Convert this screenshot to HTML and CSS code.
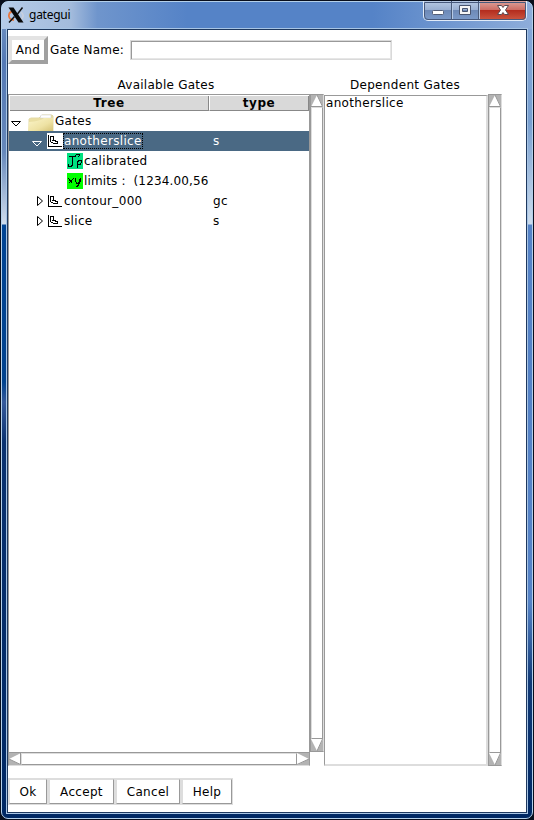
FILE: index.html
```html
<!DOCTYPE html>
<html lang="en">
<head>
<meta charset="utf-8">
<title>gategui</title>
<link rel="stylesheet" href="styles.css">
</head>
<body>
<div class="window">
  <header class="titlebar">
    <svg class="logo" width="16" height="16" viewBox="0 0 16 16"><path d="M7 4C-1 4-1 13 6 13" fill="none" stroke="#e87840" stroke-width="1.800"/><path d="M9 13c6 0 8-5 4-8" fill="none" stroke="#c9cfdd" stroke-width="1.500"/><path d="M.5.5h5L15.500 15.500h-5z" fill="#080808"/><path d="M14.500.5L9.500 7M6.500 9.500L1 15.500" stroke="#111" stroke-width="1.500"/></svg>
    <h1 class="title">gategui</h1>
    <div class="controls">
      <button class="control min" aria-label="Minimize"><svg width="14" height="14" viewBox="0 0 14 14"><rect x="1.500" y="6.500" width="11" height="4" rx="1" fill="#fff" stroke="#535d76"/></svg></button>
      <button class="control max" aria-label="Maximize"><svg width="14" height="14" viewBox="0 0 14 14"><path d="M1.500 1.500h11v9h-11zM4.500 4.500v3h5v-3z" fill="#f5f5f5" fill-rule="evenodd" stroke="#48546e"/></svg></button>
      <button class="control close" aria-label="Close"><svg width="14" height="14" viewBox="0 0 14 14"><path d="M1.500 1.500h4L7 3.500l1.500-2h4L9.500 6l3 4.500h-4L7 8.500l-1.500 2h-4L4.500 6z" fill="#fff" stroke="#5c4850"/></svg></button>
    </div>
  </header>
  <main class="client">
    <form class="name-row">
      <button type="button" class="and">And</button>
      <label class="name-label" for="gate">Gate Name:</label>
      <input id="gate" class="name-input">
    </form>
    <div class="panels">
      <section class="available">
        <h2 class="heading">Available Gates</h2>
        <div class="tree-area">
          <div class="tree">
            <div class="row head"><span>Tree</span><span>type</span></div>
            <div class="row root"><span class="name">
              <svg class="tri" width="12" height="20"><path d="M1.500 10.500h9l-4.500 4.500z"/></svg>
              <svg class="folder" width="26" height="20" viewBox="0 0 26 20"><defs><linearGradient id="fold" x2="1" y2="1"><stop stop-color="#fbf5ca"/><stop offset=".6" stop-color="#eee2a4"/><stop offset="1" stop-color="#d5c275"/></linearGradient></defs><path d="M1 20V8l2-1h8l3-3h10l1 1v15z" fill="#eadfa3" stroke="#e3daa8"/><path d="M13 4h10v3H12z" fill="#fff" stroke="#ccc" stroke-width=".5"/><path d="M0 20L1 11q12-1 15-4h9v13z" fill="url(#fold)"/></svg>
              <span class="text">Gates</span></span><span class="type"></span></div>
            <div class="row level1 selected"><span class="name">
              <svg class="tri" width="12" height="20"><path d="M1.500 10.500h9l-4.500 4.500z"/></svg>
              <svg class="icon" width="16" height="16"><rect width="16" height="16" fill="#fff" stroke="none"/><use href="#gate-icon"/></svg>
              <span class="text focus">anotherslice</span></span><span class="type">s</span></div>
            <div class="row level2"><span class="name">
              <svg class="icon" width="16" height="16"><rect width="16" height="16" fill="#00e080" stroke="none"/><path d="M1.500 4.500l1-1h5M5.500 4v8l-1 1h-3v-2M8.500 4V2.500l1-1h3v1l-2 2M10.500 14.500V9l2-2h1.500v3l-1 1.500h-2"/></svg>
              <span class="text">calibrated</span></span><span class="type"></span></div>
            <div class="row level2"><span class="name">
              <svg class="icon" width="16" height="16"><rect width="16" height="16" fill="#0f0" stroke="none"/><path d="M1.500 5.500l4 5M6.500 5.500l-5 5M8.500 5v3l1 2h2l2-5M13.500 5v3l-2 4-2 2"/></svg>
              <span class="text limits">limits :&nbsp; (1234.00,56</span></span><span class="type"></span></div>
            <div class="row level1"><span class="name">
              <svg class="tri closed" width="12" height="20"><path d="M1.500 5.500v9l5-4.500z"/></svg>
              <svg class="icon" width="16" height="16"><g id="gate-icon"><path d="M1.500 2v12M1 13.500h13.500M3.500 3.500h3v3l1 1 3 1.500v1.500h-4l-3-2zM5 7.500h2"/></g></svg>
              <span class="text">contour_000</span></span><span class="type">gc</span></div>
            <div class="row level1"><span class="name">
              <svg class="tri closed" width="12" height="20"><path d="M1.500 5.500v9l5-4.500z"/></svg>
              <svg class="icon" width="16" height="16"><use href="#gate-icon"/></svg>
              <span class="text">slice</span></span><span class="type">s</span></div>
          </div>
          <div class="vbar"><svg width="12" height="12"><use href="#up"/></svg><i></i><svg width="12" height="12"><use href="#down"/></svg></div>
          <div class="hbar"><svg width="12" height="12"><path class="bed" d="M0 0h12v12H0z"/><path class="arrow" d="M0 6L12 0v12z"/><path class="shade" d="M0 6l11.500 5.500V0"/></svg><i></i><svg width="12" height="12"><path class="bed" d="M0 0h12v12H0z"/><path class="arrow" d="M12 6L0 0v12z"/><path class="shade" d="M12 6L0 11.500"/></svg></div>
        </div>
      </section>
      <section class="dependent">
        <h2 class="heading">Dependent Gates</h2>
        <div class="list-area">
          <div class="list">anotherslice</div>
          <div class="vbar"><svg width="12" height="12"><g id="up"><path class="bed" d="M0 0h12v12H0z"/><path class="arrow" d="M6 0l6 12H0z"/><path class="shade" d="M6 0l5.500 11.500H0"/></g></svg><i></i><svg width="12" height="12"><g id="down"><path class="bed" d="M0 0h12v12H0z"/><path class="arrow" d="M6 12L0 0h12z"/><path class="shade" d="M6 12L11.500 0"/></g></svg></div>
        </div>
      </section>
    </div>
    <footer class="actions"><button>Ok</button><button>Accept</button><button>Cancel</button><button>Help</button></footer>
  </main>
</div>
</body>
</html>
```
FILE: styles.css
```css
* { box-sizing: border-box; }
body { margin: 0; background: #080e1c; font: 12px/16px "DejaVu Sans", sans-serif; letter-spacing: .32px; color: #000; overflow: hidden; }
button, input, h1, h2 { font: inherit; letter-spacing: inherit; margin: 0; padding: 0; color: inherit; }
svg { display: block; flex: none; }
.window {
  height: 818px; margin: 1px 1px 1px; padding: 0 5px 5px; border: 1px solid #b4d0ea; border-radius: 7px;
  background:
    linear-gradient(90deg, #b5cbe8, #a3bbdc 13%, #6f95cc 18%, #5583c7 35%, #5583c7 70%, #8eadda) top / 100% 27px no-repeat,
    linear-gradient(#7899c5 0, #5479b5 60px, #6688bb 150px, #d0dcec 222px, #004494 223px, #00428e 380px, #35599b 400px, #0a3270 440px, #002864 100%) left / 6px 100% no-repeat,
    linear-gradient(#86a8da 0, #789fd0 120px, #ccdced 222px, #5583c7 223px, #5583c7 600px, #123b78 680px, #002864 100%) right / 6px 100% no-repeat,
    #002864;
}
.titlebar { height: 27px; display: flex; align-items: flex-start; }
.logo { margin: 5px 0 0 1px; }
.title { margin: 5px 0 0 5px; font: 12px/16px "Noto Sans", sans-serif; letter-spacing: -.25px; }
.controls { display: flex; margin: -1px 0 0 auto; height: 20px; border: 1px solid #e1ebf8; border-top: 0; border-radius: 0 0 5px 5px; overflow: hidden; outline: 1px solid #46587b; outline-offset: -2px; }
.control { border: 0; border-right: 1px solid #4a5b7a; display: grid; place-items: center; padding-top: 1px; background: linear-gradient(#b8cae4, #9aafd1 45%, #6d89b7 50%, #7c9bca); box-shadow: inset 1px 0 #b6c9e5; width: 28px; }
.max { width: 27px; }
.close { width: 47px; border: 0; background: linear-gradient(#dda49d, #ce6e65 45%, #b42d1e 50%, #cc5741); }
.client { height: 784px; border: 1px solid #1e385e; outline: 1px solid #a8c5e5; background: #fff; display: flex; flex-direction: column; align-items: flex-start; }
.name-row { display: flex; margin-top: 6px; height: 28px; align-items: center; }
.and { width: 40px; height: 28px; border: 4px solid; border-color: #e3e3e3 #a0a0a0 #a0a0a0 #e3e3e3; background: #fff; }
.name-label { width: 82px; padding-left: 2px; letter-spacing: .2px; }
.name-input { width: 262px; height: 20px; outline: 0; border: 1px solid #d9d9d9; box-shadow: inset 1px 1px #999, inset -1px -1px #e6e6e6; background: #fff; }
.panels { display: flex; margin-top: 13px; }
.available { width: 316px; }
.dependent { width: 178px; }
.heading { height: 17px; line-height: 16px; text-align: center; letter-spacing: .25px; }
.dependent .heading { padding-right: 16px; letter-spacing: .32px; }
.tree-area { display: grid; grid-template: 658px 14px / 302px 14px; }
.tree { border: 1px solid #999; border-bottom: 0; padding-left: 1px; overflow: hidden; }
.row { display: grid; grid-template-columns: 199px 100px; height: 20px; line-height: 20px; }
.head { height: 15px; margin-top: 1px; line-height: 14px; font-weight: bold; letter-spacing: .6px; text-align: center; }
.head span { background: #d9d9d9; border: 1px solid #888; border-width: 0 1px 1px 0; }
.head span + span { border-left: 1px solid #fff; }
.name { display: flex; align-items: center; overflow: hidden; white-space: nowrap; }
.type { padding-left: 4px; }
.tri { margin-left: 1px; fill: none; stroke: #000; }
.root .tri { margin-left: 0; }
.folder { margin-left: 6px; }
.text { height: 20px; padding-left: 1px; }
.limits { letter-spacing: .14px; }
.level1 .tri { margin-left: 21px; }
.level1 .tri.closed { margin: 0 -5px 0 26px; }
.level1 .icon { margin-left: 4px; }
.level2 .icon { margin-left: 57px; }
.icon { fill: none; stroke: #000; shape-rendering: crispEdges; }
.selected { background: #4a6984; color: #fff; margin-left: -1px; padding-left: 1px; }
.selected .tri { stroke: #fff; }
.text.focus { height: 16px; line-height: 16px; outline: 1px dotted #000; outline-offset: -1px; padding-right: 1px; }
.vbar, .hbar { display: flex; background: #fff; border: 1px solid #999; }
.vbar { flex-direction: column; width: 14px; border-right-color: #ddd; }
.hbar { border-bottom-color: #ddd; }
.vbar i, .hbar i { flex: 1; background: #fff; border: 1px solid #999; border-top-color: #ddd; border-left-color: #ddd; }
.bed { fill: #b3b3b3; }
.arrow { fill: #fff; }
.shade { fill: none; stroke: #969696; }
.list-area { display: flex; height: 672px; }
.list { width: 164px; margin-top: 1px; line-height: 15px; border: 1px solid #999; border-right: 2px solid #ddd; border-bottom: 2px solid #ddd; padding-left: 1px; }
.actions { display: flex; margin-top: 12px; height: 27px; }
.actions button { height: 27px; border: 2px solid; border-color: #ddd #999 #999 #ddd; background: #fff; outline: 1px solid #ddd; outline-offset: -1px; width: 40px; }
.actions button:nth-child(2) { width: 67px; }
.actions button:nth-child(3) { width: 66px; }
.actions button:nth-child(4) { width: 52px; }
```
